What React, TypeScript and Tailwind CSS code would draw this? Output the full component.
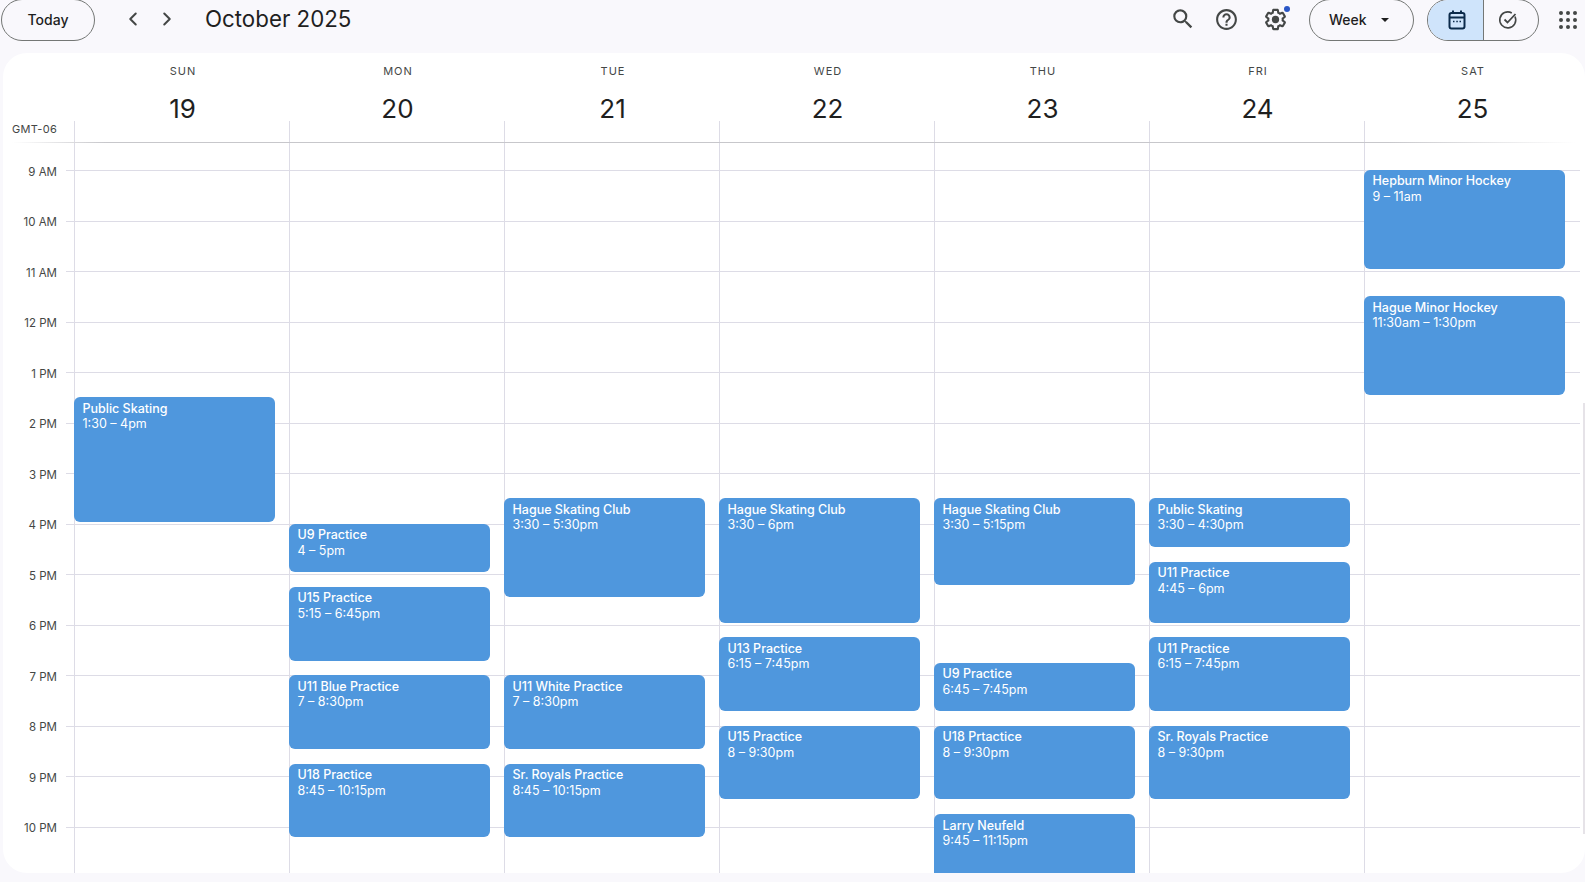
import { ChevronLeft, ChevronRight } from "lucide-react";

const HOUR_HEIGHT = 50.52;
const FIRST_LINE = 27;

const hours = ["9 AM", "10 AM", "11 AM", "12 PM", "1 PM", "2 PM", "3 PM", "4 PM", "5 PM", "6 PM", "7 PM", "8 PM", "9 PM", "10 PM"];

type CalEvent = { title: string; time: string; start: number; end: number };

const days: { name: string; date: number; events: CalEvent[] }[] = [
  { name: "SUN", date: 19, events: [{ title: "Public Skating", time: "1:30 – 4pm", start: 13.5, end: 16 }] },
  {
    name: "MON",
    date: 20,
    events: [
      { title: "U9 Practice", time: "4 – 5pm", start: 16, end: 17 },
      { title: "U15 Practice", time: "5:15 – 6:45pm", start: 17.25, end: 18.75 },
      { title: "U11 Blue Practice", time: "7 – 8:30pm", start: 19, end: 20.5 },
      { title: "U18 Practice", time: "8:45 – 10:15pm", start: 20.75, end: 22.25 },
    ],
  },
  {
    name: "TUE",
    date: 21,
    events: [
      { title: "Hague Skating Club", time: "3:30 – 5:30pm", start: 15.5, end: 17.5 },
      { title: "U11 White Practice", time: "7 – 8:30pm", start: 19, end: 20.5 },
      { title: "Sr. Royals Practice", time: "8:45 – 10:15pm", start: 20.75, end: 22.25 },
    ],
  },
  {
    name: "WED",
    date: 22,
    events: [
      { title: "Hague Skating Club", time: "3:30 – 6pm", start: 15.5, end: 18 },
      { title: "U13 Practice", time: "6:15 – 7:45pm", start: 18.25, end: 19.75 },
      { title: "U15 Practice", time: "8 – 9:30pm", start: 20, end: 21.5 },
    ],
  },
  {
    name: "THU",
    date: 23,
    events: [
      { title: "Hague Skating Club", time: "3:30 – 5:15pm", start: 15.5, end: 17.25 },
      { title: "U9 Practice", time: "6:45 – 7:45pm", start: 18.75, end: 19.75 },
      { title: "U18 Prtactice", time: "8 – 9:30pm", start: 20, end: 21.5 },
      { title: "Larry Neufeld", time: "9:45 – 11:15pm", start: 21.75, end: 23.25 },
    ],
  },
  {
    name: "FRI",
    date: 24,
    events: [
      { title: "Public Skating", time: "3:30 – 4:30pm", start: 15.5, end: 16.5 },
      { title: "U11 Practice", time: "4:45 – 6pm", start: 16.75, end: 18 },
      { title: "U11 Practice", time: "6:15 – 7:45pm", start: 18.25, end: 19.75 },
      { title: "Sr. Royals Practice", time: "8 – 9:30pm", start: 20, end: 21.5 },
    ],
  },
  {
    name: "SAT",
    date: 25,
    events: [
      { title: "Hepburn Minor Hockey", time: "9 – 11am", start: 9, end: 11 },
      { title: "Hague Minor Hockey", time: "11:30am – 1:30pm", start: 11.5, end: 13.5 },
    ],
  },
];

function TopBar() {
  return (
    <div className="flex h-[53px] items-start pl-[1px] pr-[8px] text-[#1f1f1f]">
      <div className="-mt-[1px] flex h-[42px] w-[94px] items-center justify-center rounded-full border border-[#747775] pb-[1px] text-[14px] font-medium">
        Today
      </div>
      <div className="ml-[27px] mt-[8px] flex w-[56px] justify-between text-[#444746]">
        <ChevronLeft size={22} strokeWidth={2.2} />
        <ChevronRight size={22} strokeWidth={2.2} />
      </div>
      <div className="ml-[27px] mt-[3px] text-[22.3px] leading-[32px]">October 2025</div>
      <div className="ml-auto flex items-start">
        <div className="mt-[6px] flex items-center text-[#444746]">
          <svg width="26" height="26" viewBox="0 0 24 24" fill="currentColor">
            <path d="M15.5 14h-.79l-.28-.27A6.47 6.47 0 0 0 16 9.5 6.5 6.5 0 1 0 9.5 16c1.61 0 3.09-.59 4.23-1.57l.27.28v.79l5 4.99L20.49 19l-4.99-5zm-6 0C7.01 14 5 11.99 5 9.5S7.01 5 9.5 5 14 7.01 14 9.5 11.99 14 9.5 14z" />
          </svg>
          <svg className="ml-[18px]" width="25" height="25" viewBox="0 0 24 24" fill="currentColor">
            <path d="M11 18h2v-2h-2v2zm1-16C6.48 2 2 6.48 2 12s4.48 10 10 10 10-4.48 10-10S17.52 2 12 2zm0 18c-4.41 0-8-3.59-8-8s3.59-8 8-8 8 3.59 8 8-3.59 8-8 8zm0-14c-2.21 0-4 1.79-4 4h2c0-1.1.9-2 2-2s2 .9 2 2c0 2-3 1.75-3 5h2c0-2.25 3-2.5 3-5 0-2.21-1.79-4-4-4z" />
          </svg>
          <div className="relative ml-[24px]">
            <svg width="25" height="25" viewBox="0 0 24 24" fill="currentColor">
              <path d="M13.85 22.25h-3.7c-.74 0-1.36-.54-1.45-1.27l-.27-1.89c-.27-.14-.53-.29-.79-.46l-1.8.72c-.7.26-1.47-.03-1.81-.65L2.2 15.53c-.35-.66-.2-1.44.36-1.88l1.53-1.19c-.01-.15-.02-.3-.02-.46 0-.15.01-.31.02-.46l-1.52-1.19c-.59-.45-.74-1.26-.37-1.88l1.85-3.19c.34-.62 1.11-.9 1.79-.63l1.81.73c.26-.17.52-.32.78-.46l.27-1.91c.09-.7.71-1.25 1.44-1.25h3.7c.74 0 1.36.54 1.45 1.27l.27 1.89c.27.14.53.29.79.46l1.8-.72c.71-.26 1.48.03 1.82.65l1.84 3.18c.36.66.2 1.44-.36 1.88l-1.52 1.19c.01.15.02.3.02.46s-.01.31-.02.46l1.52 1.19c.56.45.72 1.23.37 1.86l-1.86 3.22c-.34.62-1.11.9-1.8.63l-1.8-.72c-.26.17-.52.32-.78.46l-.27 1.91c-.1.68-.72 1.22-1.46 1.22zm-3.23-2h2.76l.37-2.55.53-.22c.44-.18.88-.44 1.34-.78l.45-.34 2.38.96 1.38-2.4-2.03-1.58.07-.56c.03-.26.06-.51.06-.78s-.03-.53-.06-.78l-.07-.56 2.03-1.58-1.39-2.4-2.39.96-.45-.35c-.42-.32-.87-.58-1.33-.77l-.52-.22-.37-2.55h-2.76l-.37 2.55-.53.21c-.44.19-.88.44-1.34.79l-.45.33-2.38-.95-1.39 2.39 2.03 1.58-.07.56a7 7 0 0 0-.06.79c0 .26.02.53.06.78l.07.56-2.03 1.58 1.38 2.4 2.39-.96.45.35c.43.33.86.58 1.33.77l.53.22.38 2.55z" />
              <circle cx="12" cy="12" r="3.5" />
            </svg>
            <span className="absolute right-[-2px] top-[-1px] h-[6px] w-[6px] rounded-full bg-[#2a56c6]" />
          </div>
        </div>
        <div className="-mt-[1px] ml-[21px] flex h-[42px] w-[105px] items-center rounded-full border border-[#747775] pb-[1px] pl-[19px] text-[14px] font-medium">
          Week
          <svg className="ml-[14px]" width="8" height="4" viewBox="0 0 8 4" fill="#1f1f1f">
            <path d="M0 0h8L4 4z" />
          </svg>
        </div>
        <div className="-mt-[1px] ml-[13px] flex h-[42px] w-[112px] overflow-hidden rounded-full border border-[#747775]">
          <div className="flex w-[56px] items-center justify-center border-r border-[#747775] bg-[#cfe4fb] pl-[3px] text-[#0b2a4a]">
            <svg width="18" height="20" viewBox="0 0 18 20" fill="none" stroke="currentColor" strokeWidth="2">
              <rect x="1.5" y="3" width="15" height="15.5" rx="2" />
              <path d="M1.5 7.5h15M5 0.5v3M13 0.5v3" />
              <path d="M5 11.5h1.5M8.3 11.5h1.5M11.5 11.5H13" strokeWidth="1.4" />
            </svg>
          </div>
          <div className="flex flex-1 items-center justify-center pr-[6px] text-[#444746]">
            <svg width="20" height="20" viewBox="0 0 20 20" fill="none" stroke="currentColor" strokeWidth="1.6">
              <path d="M17 6.5A8 8 0 1 1 13.8 3" />
              <path d="M6.5 9.5l3 3L17.5 4" strokeWidth="1.8" />
            </svg>
          </div>
        </div>
        <div className="ml-[20px] mt-[11px] grid grid-cols-3 gap-[3px]">
          {Array.from({ length: 9 }).map((_, i) => (
            <span key={i} className="h-[4px] w-[4px] rounded-full bg-[#444746]" />
          ))}
        </div>
      </div>
    </div>
  );
}

function DayHeader({ name, date }: { name: string; date: number }) {
  return (
    <div className="flex h-[89px] flex-col items-center">
      <div className="mt-[11px] pl-[3px] text-[11px] leading-[14px] tracking-[1px] text-[#444746]">{name}</div>
      <div className="mt-[18px] pl-[2px] text-[26px] leading-[25px] text-[#1f1f1f]">{date}</div>
      <div className="mt-auto h-[21px] w-full shrink-0 border-l border-[#dddce6]" />
    </div>
  );
}

function DayColumn({ events }: { events: CalEvent[] }) {
  return (
    <div className="relative border-l border-[#dddce6]">
      {events.map((e) => (
        <div
          key={e.title + e.time}
          className="absolute -left-px w-[201px] overflow-hidden rounded-[6px] bg-[#4f97dd] pl-[8.5px] pt-[3.4px] text-[12.5px] leading-[16px] text-white"
          style={{
            top: FIRST_LINE + (e.start - 9) * HOUR_HEIGHT,
            height: (e.end - e.start) * HOUR_HEIGHT - 2,
          }}
        >
          <div className="font-[550]">{e.title}</div>
          <div className="-mt-[0.4px]">{e.time}</div>
        </div>
      ))}
    </div>
  );
}

export default function App() {
  return (
    <div className="h-[882px] w-[1585px] overflow-hidden bg-[#f9f8fc] font-['Inter',sans-serif]">
      <TopBar />
      <div className="ml-[3px] flex h-[820px] flex-col overflow-hidden rounded-[24px] bg-white">
        <div className="grid grid-cols-[71px_repeat(7,215px)]">
          <div className="flex h-[89px] items-end pb-[6px] pl-[9px] text-[11px] leading-[14px] tracking-[0.3px] text-[#444746]">GMT-06</div>
          {days.map((d) => (
            <DayHeader key={d.name} name={d.name} date={d.date} />
          ))}
        </div>
        <div className="mx-[9px] h-px bg-[linear-gradient(to_right,#ffffff,#c7c7cb_6%,#c7c7cb_88%,#ffffff)]" />
        <div className="relative flex-1 overflow-hidden">
          <div className="h-[27px]" />
          {hours.map((h) => (
            <div key={h} className="flex h-[50.52px]">
              <div className="-mt-[5.5px] h-[14px] w-[54px] text-right text-[11.5px] leading-[14px] text-[#444746]">{h}</div>
              <div className="ml-[9px] mr-[5px] flex-1 border-t border-[#dddce6]" />
            </div>
          ))}
          <div className="absolute inset-0 grid grid-cols-[71px_repeat(7,215px)]">
            <div />
            {days.map((d) => (
              <DayColumn key={d.name} events={d.events} />
            ))}
          </div>
          <div className="absolute bottom-[39px] right-0 h-[431px] w-[2px] bg-[#e6e3e8]" />
        </div>
      </div>
    </div>
  );
}
